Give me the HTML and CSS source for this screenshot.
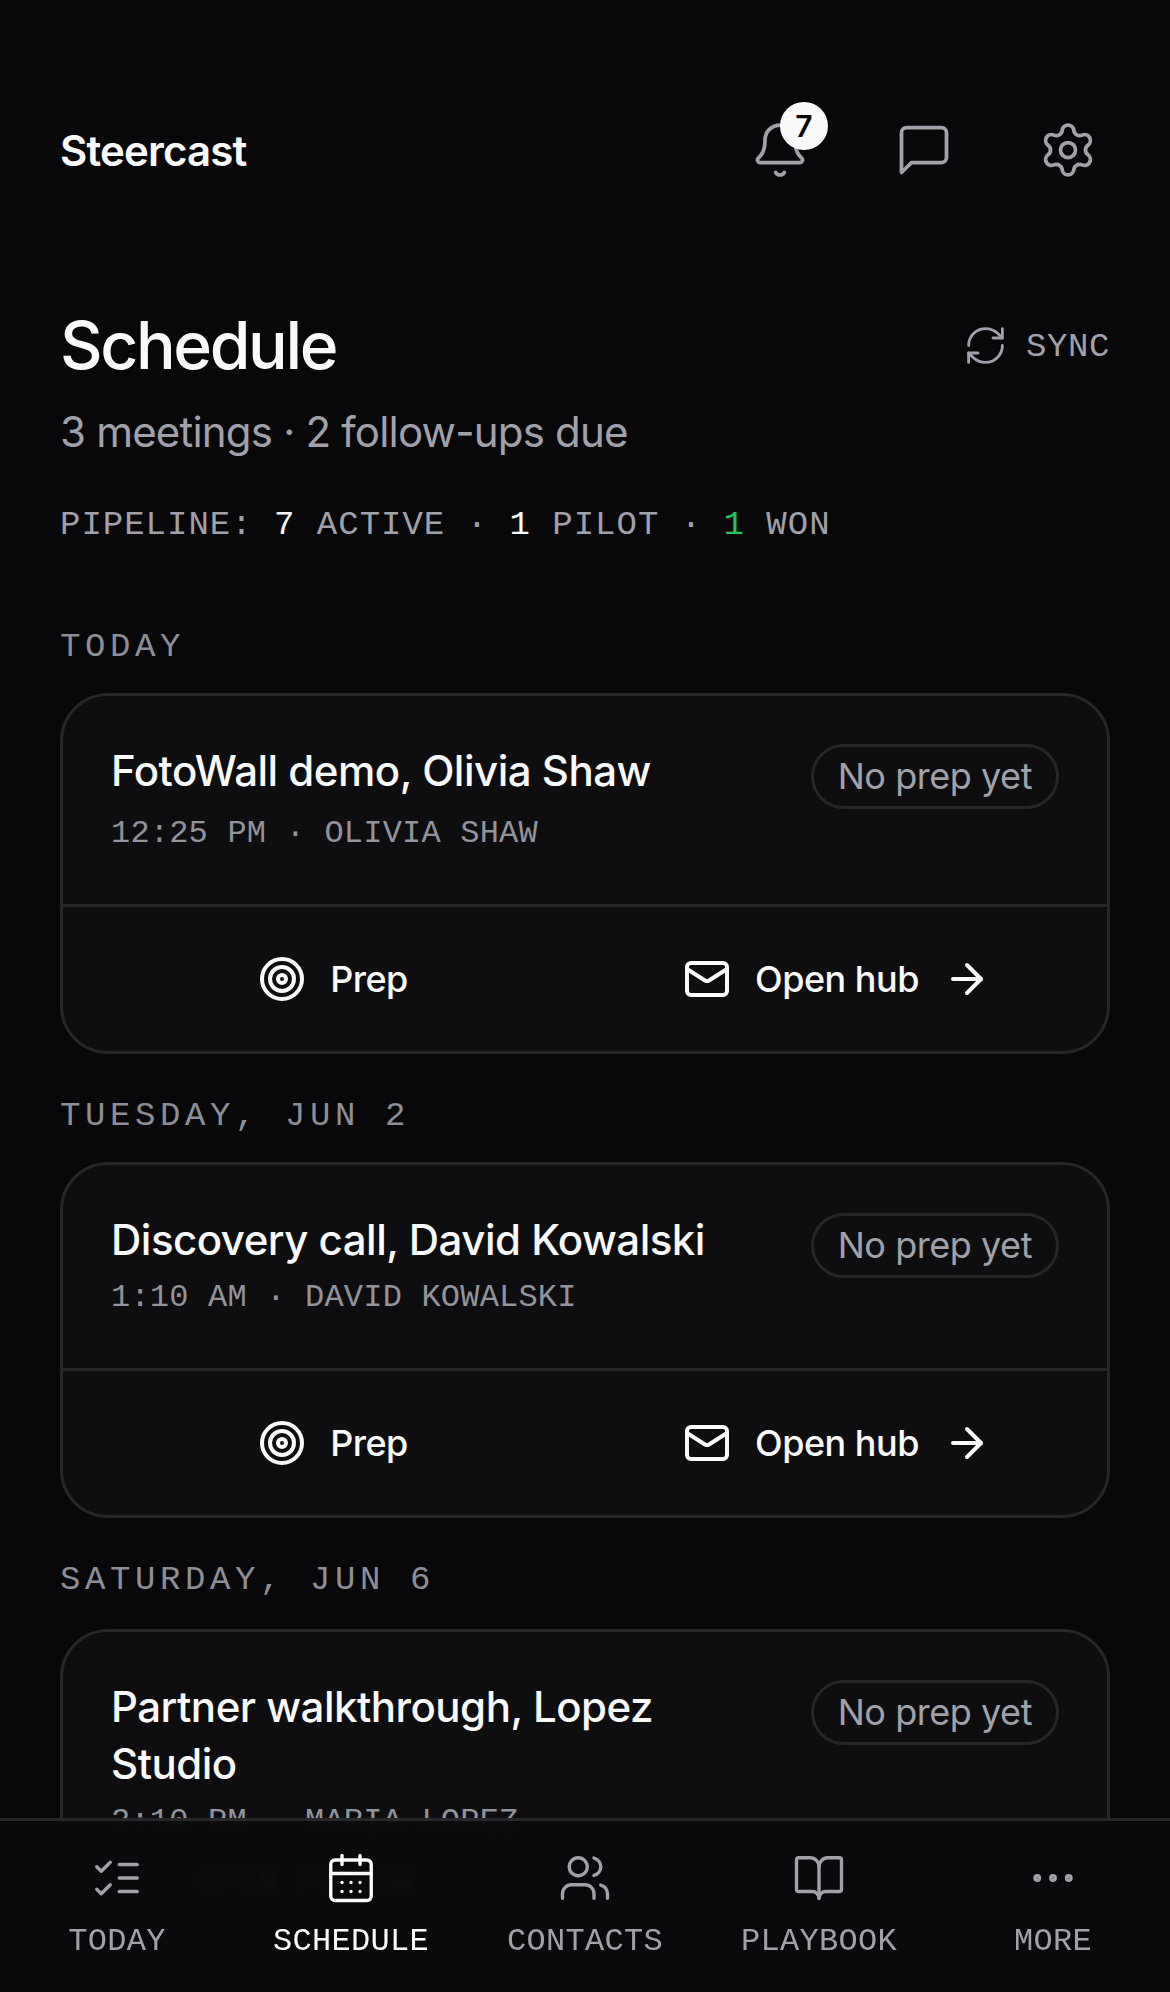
FILE: index.html
```html
<!DOCTYPE html>
<html lang="en">
<head>
  <meta charset="UTF-8">
  <meta name="viewport" content="width=device-width, initial-scale=1.0">
  <title>Schedule - Steercast</title>
  <link rel="stylesheet" href="styles.css">
</head>
<body>
  <header class="topbar">
    <div class="brand">Steercast</div>
    <div class="topbar-icons">
      <button class="icon-btn">
        <svg class="icon-60" viewBox="0 0 24 24"><path d="M10.268 21a2 2 0 0 0 3.464 0"/><path d="M3.262 15.326A1 1 0 0 0 4 17h16a1 1 0 0 0 .74-1.673C19.41 13.956 18 12.499 18 8A6 6 0 0 0 6 8c0 4.499-1.411 5.956-2.738 7.326"/></svg>
        <span class="badge">7</span>
      </button>
      <button class="icon-btn">
        <svg class="icon-60" viewBox="0 0 24 24"><path d="M21 15a2 2 0 0 1-2 2H7l-4 4V5a2 2 0 0 1 2-2h14a2 2 0 0 1 2 2z"/></svg>
      </button>
      <button class="icon-btn">
        <svg class="icon-60" viewBox="0 0 24 24"><path d="M9.671 4.136a2.34 2.34 0 0 1 4.659 0 2.34 2.34 0 0 0 3.319 1.915 2.34 2.34 0 0 1 2.33 4.033 2.34 2.34 0 0 0 0 3.831 2.34 2.34 0 0 1-2.33 4.033 2.34 2.34 0 0 0-3.319 1.915 2.34 2.34 0 0 1-4.659 0 2.34 2.34 0 0 0-3.32-1.915 2.34 2.34 0 0 1-2.33-4.033 2.34 2.34 0 0 0 0-3.831A2.34 2.34 0 0 1 6.35 6.051a2.34 2.34 0 0 0 3.319-1.915"/><circle cx="12" cy="12" r="3"/></svg>
      </button>
    </div>
  </header>

  <main class="content">
    <div class="page-head">
      <h1>Schedule</h1>
      <button class="sync">
        <svg class="icon-45" viewBox="0 0 24 24"><path d="M3 12a9 9 0 0 1 9-9 9.75 9.75 0 0 1 6.74 2.74L21 8"/><path d="M21 3v5h-5"/><path d="M21 12a9 9 0 0 1-9 9 9.75 9.75 0 0 1-6.74-2.74L3 16"/><path d="M8 16H3v5"/></svg>
        <span class="sync-label">SYNC</span>
      </button>
    </div>
    <p class="subtitle">3 meetings · 2 follow-ups due</p>
    <p class="pipeline">PIPELINE: <b>7</b> ACTIVE · <b>1</b> PILOT · <b class="won">1</b> WON</p>

    <h2 class="day day-first">TODAY</h2>
    <section class="card">
      <div class="card-body">
        <div class="card-text">
          <div class="card-title">FotoWall demo, Olivia Shaw</div>
          <div class="card-meta card-meta-low">12:25 PM · OLIVIA SHAW</div>
        </div>
        <span class="pill">No prep yet</span>
      </div>
      <div class="card-actions">
        <a class="action">
          <svg class="icon-48" viewBox="0 0 24 24"><circle cx="12" cy="12" r="10"/><circle cx="12" cy="12" r="6"/><circle cx="12" cy="12" r="2"/></svg>
          Prep
        </a>
        <a class="action">
          <svg class="icon-48" viewBox="0 0 24 24"><path d="m22 7-8.991 5.727a2 2 0 0 1-2.009 0L2 7"/><rect x="2" y="4" width="20" height="16" rx="2"/></svg>
          Open hub
          <svg class="icon-48" viewBox="0 0 24 24"><path d="M5 12h14"/><path d="m12 5 7 7-7 7"/></svg>
        </a>
      </div>
    </section>

    <h2 class="day">TUESDAY, JUN 2</h2>
    <section class="card">
      <div class="card-body">
        <div class="card-text">
          <div class="card-title">Discovery call, David Kowalski</div>
          <div class="card-meta">1:10 AM · DAVID KOWALSKI</div>
        </div>
        <span class="pill">No prep yet</span>
      </div>
      <div class="card-actions">
        <a class="action">
          <svg class="icon-48" viewBox="0 0 24 24"><circle cx="12" cy="12" r="10"/><circle cx="12" cy="12" r="6"/><circle cx="12" cy="12" r="2"/></svg>
          Prep
        </a>
        <a class="action">
          <svg class="icon-48" viewBox="0 0 24 24"><path d="m22 7-8.991 5.727a2 2 0 0 1-2.009 0L2 7"/><rect x="2" y="4" width="20" height="16" rx="2"/></svg>
          Open hub
          <svg class="icon-48" viewBox="0 0 24 24"><path d="M5 12h14"/><path d="m12 5 7 7-7 7"/></svg>
        </a>
      </div>
    </section>

    <h2 class="day day-last">SATURDAY, JUN 6</h2>
    <section class="card card-clipped">
      <div class="card-body">
        <div class="card-text">
          <div class="card-title">Partner walkthrough, Lopez Studio</div>
          <div class="card-meta">2:10 PM · MARIA LOPEZ</div>
          <div class="card-followup">OPEN FOLLOW</div>
        </div>
        <span class="pill">No prep yet</span>
      </div>
    </section>
  </main>

  <nav class="tabbar">
    <a class="tab">
      <svg class="icon-54" viewBox="0 0 24 24"><path d="m3 17 2 2 4-4"/><path d="m3 7 2 2 4-4"/><path d="M13 6h8"/><path d="M13 12h8"/><path d="M13 18h8"/></svg>
      TODAY
    </a>
    <a class="tab tab-active">
      <svg class="icon-54" viewBox="0 0 24 24"><path d="M8 2v4"/><path d="M16 2v4"/><rect x="3" y="4" width="18" height="18" rx="2"/><path d="M3 10h18"/><path d="M8 14h.01"/><path d="M12 14h.01"/><path d="M16 14h.01"/><path d="M8 18h.01"/><path d="M12 18h.01"/><path d="M16 18h.01"/></svg>
      SCHEDULE
    </a>
    <a class="tab">
      <svg class="icon-54" viewBox="0 0 24 24"><path d="M16 21v-2a4 4 0 0 0-4-4H6a4 4 0 0 0-4 4v2"/><circle cx="9" cy="7" r="4"/><path d="M22 21v-2a4 4 0 0 0-3-3.87"/><path d="M16 3.13a4 4 0 0 1 0 7.75"/></svg>
      CONTACTS
    </a>
    <a class="tab">
      <svg class="icon-54" viewBox="0 0 24 24"><path d="M12 7v14"/><path d="M3 18a1 1 0 0 1-1-1V4a1 1 0 0 1 1-1h5a4 4 0 0 1 4 4 4 4 0 0 1 4-4h5a1 1 0 0 1 1 1v13a1 1 0 0 1-1 1h-6a3 3 0 0 0-3 3 3 3 0 0 0-3-3z"/></svg>
      PLAYBOOK
    </a>
    <a class="tab">
      <svg class="icon-54" viewBox="0 0 24 24"><circle cx="12" cy="12" r="1"/><circle cx="19" cy="12" r="1"/><circle cx="5" cy="12" r="1"/></svg>
      MORE
    </a>
  </nav>
</body>
</html>
```

FILE: styles.css
```css
html, body {
  height: 100%;
}
body {
  margin: 0;
  height: 1992px;
  overflow: hidden;
  background: #08080a;
  color: #fafafa;
  font-family: "Inter", sans-serif;
}
svg {
  fill: none;
  stroke: currentColor;
  stroke-linecap: round;
  stroke-linejoin: round;
  flex: none;
  display: block;
}
.icon-60 { width: 60px; height: 60px; stroke-width: 1.5; }
.icon-54 { width: 54px; height: 54px; stroke-width: 1.5; }
.icon-48 { width: 48px; height: 48px; stroke-width: 2; }
.icon-45 { width: 45px; height: 45px; stroke-width: 1.5; }
button {
  background: none;
  border: none;
  padding: 0;
  color: inherit;
  font: inherit;
}

.topbar {
  display: flex;
  justify-content: space-between;
  align-items: center;
  padding: 120px 60px 0;
  height: 60px;
}
.brand {
  font-size: 42px;
  font-weight: 600;
  letter-spacing: -0.02em;
}
.topbar-icons {
  display: flex;
  gap: 84px;
  color: #a1a1aa;
  margin-right: 12px;
}
.icon-btn {
  position: relative;
  display: block;
}
.badge {
  position: absolute;
  top: -18px;
  left: 30px;
  width: 48px;
  height: 48px;
  border-radius: 50%;
  background: #fafafa;
  color: #08080a;
  font-size: 30px;
  font-weight: 600;
  display: flex;
  align-items: center;
  justify-content: center;
}

.content {
  height: 1812px;
  box-sizing: border-box;
  overflow: hidden;
  padding: 124px 60px 0;
}
.page-head {
  display: flex;
  justify-content: space-between;
  align-items: center;
}
h1 {
  margin: 0;
  font-size: 66px;
  font-weight: 500;
  line-height: 82px;
  letter-spacing: -0.036em;
}
.sync {
  display: flex;
  align-items: center;
  gap: 18px;
  color: #a1a1aa;
  font-family: "Liberation Mono", monospace;
  font-size: 34px;
  letter-spacing: 0.6px;
}
.sync-label {
  padding-top: 4px;
}
.subtitle {
  margin: 16px 0 0;
  font-size: 42px;
  line-height: 60px;
  letter-spacing: -0.8px;
  color: #a1a1aa;
}
.pipeline {
  margin: 41px 0 0;
  font-family: "Liberation Mono", monospace;
  font-size: 34px;
  line-height: 44px;
  letter-spacing: 1px;
  color: #a1a1aa;
}
.pipeline b {
  font-weight: 400;
  color: #fafafa;
}
.pipeline .won {
  color: #22c55e;
}

.day {
  margin: 40px 0 24px;
  font-family: "Liberation Mono", monospace;
  font-size: 34px;
  font-weight: 400;
  line-height: 44px;
  letter-spacing: 4.6px;
  color: #8e8e96;
}
.day-first {
  margin-top: 78px;
}
.day-last {
  margin-bottom: 27px;
}
.card {
  background: #0e0e11;
  border: 3px solid #27272a;
  border-radius: 48px;
}
.card-clipped {
  min-height: 420px;
}
.card-body {
  display: flex;
  justify-content: space-between;
  align-items: flex-start;
  gap: 36px;
  padding: 48px;
  border-bottom: 3px solid #27272a;
}
.card-title {
  margin-top: -2px;
  font-size: 42px;
  font-weight: 500;
  line-height: 57px;
  letter-spacing: -0.5px;
}
.card-meta {
  margin-top: 8px;
  font-family: "Liberation Mono", monospace;
  font-size: 32px;
  line-height: 44px;
  letter-spacing: 0.2px;
  color: #93939b;
}
.card-meta-low {
  margin-top: 13px;
}
.card-followup {
  margin-top: 16px;
  padding-left: 88px;
  font-family: "Liberation Mono", monospace;
  font-size: 32px;
  line-height: 44px;
  letter-spacing: 0.2px;
  color: #a1a1aa;
}
.pill {
  flex: none;
  padding: 0 24px;
  height: 59px;
  line-height: 59px;
  border: 3px solid #27272a;
  border-radius: 36px;
  font-size: 36px;
  letter-spacing: -0.45px;
  color: #a1a1aa;
}
.card-actions {
  display: grid;
  grid-template-columns: 1fr 1fr;
  gap: 60px;
  padding: 48px;
}
.action {
  display: flex;
  justify-content: center;
  align-items: center;
  gap: 24px;
  font-size: 36px;
  font-weight: 500;
  letter-spacing: -0.5px;
}

.tabbar {
  position: fixed;
  left: 0;
  right: 0;
  bottom: 0;
  height: 171px;
  display: grid;
  grid-template-columns: repeat(5, 1fr);
  background: rgba(10, 10, 12, 0.97);
  border-top: 3px solid #27272a;
  backdrop-filter: blur(3px);
}
.tab {
  display: flex;
  flex-direction: column;
  align-items: center;
  padding-top: 30px;
  gap: 17px;
  font-family: "Liberation Mono", monospace;
  font-size: 32px;
  line-height: 40px;
  letter-spacing: 0.3px;
  color: #a1a1aa;
}
.tab-active {
  color: #fafafa;
}
```
